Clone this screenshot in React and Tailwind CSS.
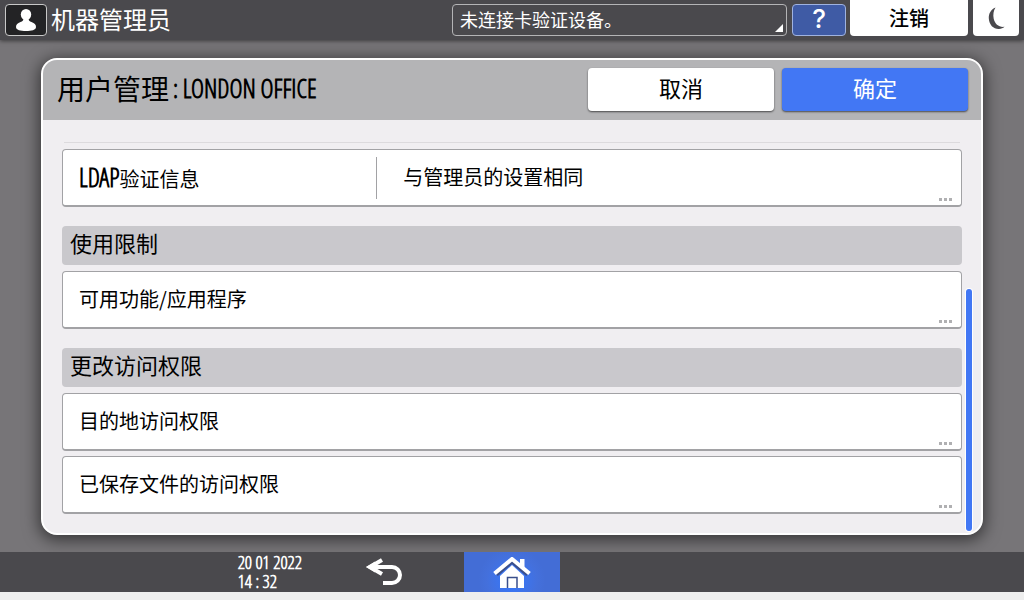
import React from 'react';

const UserIcon = () => (
  <svg width="20" height="22" viewBox="0 0 20 22" fill="#fff" aria-hidden="true">
    <ellipse cx="10" cy="5.5" rx="5.2" ry="5.5" />
    <path d="M7.500 9.500h5c0 2 1 2.800 3 3.500 3 1.100 4.500 2.400 4.500 5 0 3-4.500 4-10 4S0 21 0 18c0-2.600 1.500-3.900 4.500-5 2-.7 3-1.500 3-3.500z" />
  </svg>
);

const MoonIcon = () => (
  <svg width="17" height="23" viewBox="0 0 17 23" fill="#4a494d" aria-hidden="true">
    <path d="M7.500 0.500C3 2.500 0.500 6.500 0.800 11.500c.4 6.500 4.700 10.700 10.200 10.500 2.200-.1 4-.9 5.500-2.200-5.500.7-9.600-2.500-10.800-8C4.900 7.600 5.500 3.500 7.500 .5z" />
  </svg>
);

const BackIcon = () => (
  <svg width="37" height="28" viewBox="0 0 37 28" fill="none" stroke="#fff" strokeWidth="4" aria-hidden="true">
    <path d="M4 9h22a8 8 0 0 1 0 16H17" />
    <path d="M16 2L4 9l12 7" />
    <path d="M0 9L9 3.500v11z" fill="#fff" stroke="none" />
  </svg>
);

const HomeIcon = () => (
  <svg width="38" height="31" viewBox="0 0 38 31" fill="#fff" aria-hidden="true">
    <path d="M27 2h4.500v9.500L27 7.500z" />
    <path d="M7 19L19 8l12 11v12H7z" />
    <path d="M14.500 31V20.500h9.500V31" fill="none" stroke="#3a4f8c" strokeWidth="1.500" />
    <path d="M3.500 17.500L19 4.500l15.500 13" fill="none" stroke="#3a4f8c" strokeWidth="4" />
    <path d="M1.500 16.500L19 2l17.500 14.500" fill="none" stroke="#fff" strokeWidth="4" />
  </svg>
);

const Dots = () => (
  <span className="absolute bottom-1 right-[9px] flex gap-0.5">
    <span className="h-[3px] w-[3px] bg-[#b0b0b2]" />
    <span className="h-[3px] w-[3px] bg-[#b0b0b2]" />
    <span className="h-[3px] w-[3px] bg-[#b0b0b2]" />
  </span>
);

// narrow face for latin letters and digits
const Latin = ({ children }) => (
  <span className="font-['Open_Sans_Condensed_Light','Roboto_Condensed',sans-serif] text-[25px] font-semibold">
    {children}
  </span>
);

const SettingRow = ({ label, value }) => (
  <button
    type="button"
    className="relative flex h-[58px] w-full items-center rounded border border-b-2 border-[#a2a2a5] bg-white text-left text-[20px] leading-6"
  >
    {value ? (
      <>
        <span className="w-[35%] border-r border-[#a2a2a5] py-2 pl-4">{label}</span>
        <span className="pb-0.5 pl-[26px]">{value}</span>
      </>
    ) : (
      <span className="pb-0.5 pl-4">{label}</span>
    )}
    <Dots />
  </button>
);

const sections = [
  { title: '使用限制', rows: ['可用功能/应用程序'] },
  { title: '更改访问权限', rows: ['目的地访问权限', '已保存文件的访问权限'] },
];

export default function App() {
  return (
    <div className="flex min-h-screen flex-col bg-[#eeeeee] font-['Noto_Sans_CJK_SC',sans-serif] text-black">
      <header className="z-10 flex h-10 items-start justify-between bg-[#4a494d] px-[5px] shadow-[0_1px_4px_rgba(0,0,0,0.5)]">
        <div className="flex items-start gap-1 pt-1">
          <button
            type="button"
            aria-label="用户"
            className="flex h-8 w-[42px] items-center justify-center rounded border border-[#c8c8c8] bg-[#232325]"
          >
            <UserIcon />
          </button>
          <span className="text-[24px] leading-[30px] text-white">机器管理员</span>
        </div>
        <div className="flex items-start">
          <button
            type="button"
            className="relative mt-1 h-8 w-[335px] rounded border border-[#b4b4b6] px-[7px] pb-0.5 text-left text-[18px] leading-6 text-white"
          >
            未连接卡验证设备。
            <svg className="absolute bottom-[3px] right-[3px]" width="8" height="8" viewBox="0 0 8 8" fill="#fff" aria-hidden="true">
              <path d="M8 0v8H0z" />
            </svg>
          </button>
          <button
            type="button"
            className="ml-[5px] mt-1 h-8 w-[54px] rounded border border-[#9fb2e0] bg-[#3f5ba5] pb-0.5 font-['Inter'] text-[26px] font-medium leading-7 text-white"
          >
            ?
          </button>
          <button type="button" className="ml-1 h-9 w-[118px] rounded-b-sm bg-white text-[20px] font-medium leading-9">
            注销
          </button>
          <button
            type="button"
            aria-label="睡眠"
            className="ml-[5px] flex h-9 w-[46px] items-center justify-center rounded-b-sm bg-white"
          >
            <MoonIcon />
          </button>
        </div>
      </header>

      <main className="flex flex-1 flex-col bg-[#777578] px-[41px] pb-[17px] pt-[18px]">
        <section className="flex flex-1 flex-col overflow-hidden rounded-2xl border-2 border-white bg-[#f0eef1] shadow-[0_3px_16px_2px_rgba(0,0,0,0.55)]">
          <div className="flex h-[60px] items-start justify-between bg-[#b4b4b6] pl-3.5 pr-[13px] pt-2">
            <h1 className="flex items-center gap-1 leading-10">
              <span className="text-[28px] leading-9">用户管理</span>
              <Latin>: LONDON OFFICE</Latin>
            </h1>
            <div className="flex gap-2 text-[22px] leading-9">
              <button type="button" className="h-[43px] w-[186px] rounded bg-white pb-1.5 shadow-[0_1px_2px_rgba(0,0,0,0.6)]">
                取消
              </button>
              <button
                type="button"
                className="h-[43px] w-[186px] rounded bg-[#4277f4] pb-1.5 text-white shadow-[0_1px_2px_rgba(0,0,0,0.6)]"
              >
                确定
              </button>
            </div>
          </div>

          <div className="flex flex-1 gap-1 pl-[19px] pr-[9px]">
            <div className="flex-1 pb-[19px] pt-[22px]">
              <div className="mx-0.5 mb-1.5 h-px bg-[#dcdadd]" />
              <SettingRow label={<><Latin>LDAP</Latin>验证信息</>} value="与管理员的设置相同" />
              {sections.map((section) => (
                <div key={section.title}>
                  <h2 className="mb-1.5 mt-[19px] h-[39px] rounded bg-[#c9c8cc] px-2 text-[22px] leading-8">
                    {section.title}
                  </h2>
                  <div className="flex flex-col gap-[5px]">
                    {section.rows.map((row) => (
                      <SettingRow key={row} label={row} />
                    ))}
                  </div>
                </div>
              ))}
            </div>
            <div className="flex w-1.5 flex-col justify-end pb-0.5">
              <div className="h-[59%] rounded-full bg-[#4277f4] shadow-[0_0_0_1px_#fff]" />
            </div>
          </div>
        </section>
      </main>

      <footer className="mb-2 grid h-10 grid-cols-[1fr_96px_1fr] bg-[#4a494d]">
        <div className="flex items-center justify-end gap-16 pr-[61px]">
          <div className="font-['Open_Sans_Condensed_Light','Roboto_Condensed',sans-serif] text-[18px] font-semibold leading-[19px] text-white">
            <div>20 01 2022</div>
            <div>14 : 32</div>
          </div>
          <button type="button" aria-label="返回">
            <BackIcon />
          </button>
        </div>
        <button
          type="button"
          aria-label="主页"
          className="flex items-center justify-center bg-[#436dd6] bg-[radial-gradient(circle_at_50%_70%,#3478ff_0%,#4470dc_45%,#436dd6_60%)]"
        >
          <HomeIcon />
        </button>
      </footer>
    </div>
  );
}
